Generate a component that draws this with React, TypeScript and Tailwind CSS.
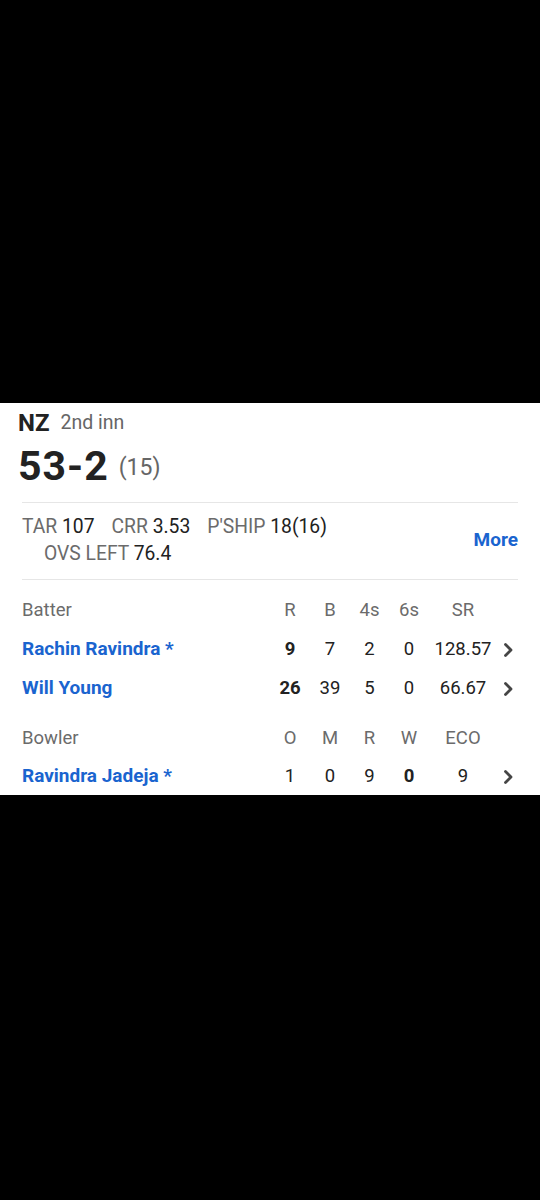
import { Fragment } from "react";

const batters = [
  { name: "Rachin Ravindra *", r: "9", b: "7", fours: "2", sixes: "0", sr: "128.57" },
  { name: "Will Young", r: "26", b: "39", fours: "5", sixes: "0", sr: "66.67" }
];

const grid = "grid grid-cols-[1fr_40px_40px_39px_40px_68px_21px] items-center px-[22px]";

function Chevron() {
  return (
    <svg width="12" height="16" viewBox="0 0 12 16" className="mx-auto" aria-hidden="true">
      <path d="M3.5 2.5l5.5 5.5-5.5 5.5" fill="none" stroke="#454545" strokeWidth="2.8" strokeLinecap="round" strokeLinejoin="round" />
    </svg>
  );
}

function Stat({ label, value }: { label: string; value: string }) {
  return (
    <span>
      <span className="text-[#6b6b6b]">{label}</span>{" "}
      <span className="text-[#212121]">{value}</span>
    </span>
  );
}

export default function App() {
  return (
    <div
      className="min-h-[1200px] w-[540px] bg-black"
      style={{ fontFamily: "Roboto, 'Noto Sans', sans-serif" }}
    >
      <div className="h-[403px]" />
      <section className="bg-white">
        <div className="px-[18px] pt-[6px]">
          <div className="flex h-[28px] items-center gap-[11px]">
            <span className="text-[24px] font-bold leading-[28px] text-[#222]">NZ</span>
            <span className="text-[19.5px] leading-[28px] text-[#666]">2nd inn</span>
          </div>
          <div className="mt-[5px] flex h-[48px] items-center gap-[10px]">
            <span className="text-[41px] font-bold leading-[48px] tracking-[1px] text-[#222]">
              53-2
            </span>
            <span className="pt-[4px] text-[23px] leading-[48px] text-[#666]">(15)</span>
          </div>
        </div>

        <div className="mx-[22px] mt-[12px] h-px bg-[#e6e6e6]" />

        <div className="mx-[22px] mt-[10px] flex items-center justify-between">
          <div className="text-[19.3px] leading-[27px]">
            <div className="flex gap-[17px]">
              <Stat label="TAR" value="107" />
              <Stat label="CRR" value="3.53" />
              <Stat label="P'SHIP" value="18(16)" />
            </div>
            <div className="pl-[22px]">
              <Stat label="OVS LEFT" value="76.4" />
            </div>
          </div>
          <span className="text-[19px] font-bold text-[#1a64cf]">More</span>
        </div>

        <div className="mx-[22px] mt-[12px] h-px bg-[#e6e6e6]" />

        <div className="mt-[12px] text-[18.5px]">
          <div className={`${grid} h-[38px] text-[#6b6b6b]`}>
            <span>Batter</span>
            <span className="text-center">R</span>
            <span className="text-center">B</span>
            <span className="text-center">4s</span>
            <span className="text-center">6s</span>
            <span className="text-center">SR</span>
            <span />
          </div>
          {batters.map((p) => (
            <div key={p.name} className={`${grid} h-[39px] text-[#222]`}>
              <span className="text-[19px] font-bold text-[#1a64cf]">{p.name}</span>
              <span className="text-center font-bold">{p.r}</span>
              <span className="text-center">{p.b}</span>
              <span className="text-center">{p.fours}</span>
              <span className="text-center">{p.sixes}</span>
              <span className="text-center">{p.sr}</span>
              <Chevron />
            </div>
          ))}

          <div className={`${grid} mt-[12px] h-[38px] text-[#6b6b6b]`}>
            <span>Bowler</span>
            <span className="text-center">O</span>
            <span className="text-center">M</span>
            <span className="text-center">R</span>
            <span className="text-center">W</span>
            <span className="text-center">ECO</span>
            <span />
          </div>
          <div className={`${grid} h-[37px] text-[#222]`}>
            <span className="text-[19px] font-bold text-[#1a64cf]">Ravindra Jadeja *</span>
            {["1", "0", "9"].map((v, i) => (
              <Fragment key={i}>
                <span className="text-center">{v}</span>
              </Fragment>
            ))}
            <span className="text-center font-bold">0</span>
            <span className="text-center">9</span>
            <Chevron />
          </div>
        </div>
      </section>
    </div>
  );
}
